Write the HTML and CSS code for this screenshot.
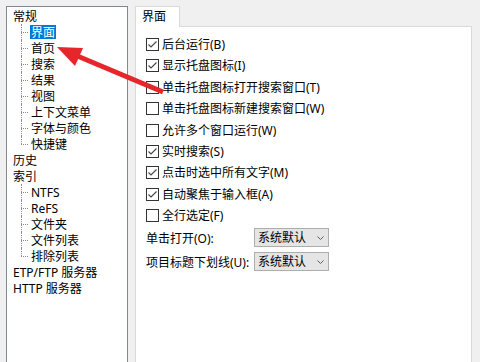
FILE: index.html
```html
<!DOCTYPE html>
<html lang="zh-CN">
<head>
<meta charset="utf-8">
<title>选项</title>
<link rel="stylesheet" href="styles.css">
</head>
<body>
<div class="window">
  <div class="tree">
    <ul class="nodes">
      <li><span class="label">常规</span>
        <ul class="children">
          <li><span class="label selected">界面</span></li>
          <li><span class="label">首页</span></li>
          <li><span class="label">搜索</span></li>
          <li><span class="label">结果</span></li>
          <li><span class="label">视图</span></li>
          <li><span class="label">上下文菜单</span></li>
          <li><span class="label">字体与颜色</span></li>
          <li><span class="label">快捷键</span></li>
        </ul>
      </li>
      <li><span class="label">历史</span></li>
      <li><span class="label">索引</span>
        <ul class="children">
          <li><span class="label">NTFS</span></li>
          <li><span class="label">ReFS</span></li>
          <li><span class="label">文件夹</span></li>
          <li><span class="label">文件列表</span></li>
          <li><span class="label">排除列表</span></li>
        </ul>
      </li>
      <li><span class="label">ETP/FTP 服务器</span></li>
      <li><span class="label">HTTP 服务器</span></li>
    </ul>
  </div>
  <div class="tabs">
    <div class="tab">界面</div>
    <div class="page">
      <div class="checks">
        <div class="check"><span class="box checked"><svg viewBox="0 0 11 11" width="11" height="11"><polyline points="1.5,5.5 4,8 9.5,2.5"/></svg></span><span>后台运行(B)</span></div>
        <div class="check"><span class="box checked"><svg viewBox="0 0 11 11" width="11" height="11"><polyline points="1.5,5.5 4,8 9.5,2.5"/></svg></span><span>显示托盘图标(I)</span></div>
        <div class="check"><span class="box"></span><span>单击托盘图标打开搜索窗口(T)</span></div>
        <div class="check"><span class="box"></span><span>单击托盘图标新建搜索窗口(W)</span></div>
        <div class="check"><span class="box"></span><span>允许多个窗口运行(W)</span></div>
        <div class="check"><span class="box checked"><svg viewBox="0 0 11 11" width="11" height="11"><polyline points="1.5,5.5 4,8 9.5,2.5"/></svg></span><span>实时搜索(S)</span></div>
        <div class="check"><span class="box checked"><svg viewBox="0 0 11 11" width="11" height="11"><polyline points="1.5,5.5 4,8 9.5,2.5"/></svg></span><span>点击时选中所有文字(M)</span></div>
        <div class="check"><span class="box checked"><svg viewBox="0 0 11 11" width="11" height="11"><polyline points="1.5,5.5 4,8 9.5,2.5"/></svg></span><span>自动聚焦于输入框(A)</span></div>
        <div class="check"><span class="box"></span><span>全行选定(F)</span></div>
      </div>
      <div class="fields">
        <div class="field"><span class="flabel">单击打开(O):</span><span class="select"><span>系统默认</span><svg viewBox="0 0 7 4" width="7" height="4"><polyline points="0.5,0.5 3.5,3.5 6.5,0.5"/></svg></span></div>
        <div class="field"><span class="flabel">项目标题下划线(U):</span><span class="select"><span>系统默认</span><svg viewBox="0 0 7 4" width="7" height="4"><polyline points="0.5,0.5 3.5,3.5 6.5,0.5"/></svg></span></div>
      </div>
    </div>
  </div>
</div>
<svg class="arrow" width="480" height="362" viewBox="0 0 480 362">
  <line x1="163" y1="92" x2="75" y2="55" />
  <polygon points="57,47 83,48 75,66" />
</svg>
</body>
</html>
```
FILE: styles.css
```css
html, body {
  margin: 0;
  padding: 0;
}
body {
  width: 480px;
  height: 362px;
  overflow: hidden;
  position: relative;
  background: #f0f0f0;
  font-family: "Noto Sans", "Noto Sans CJK SC", sans-serif;
  font-size: 12px;
  color: #000;
}
.window {
  display: flex;
  gap: 7px;
  padding: 6px 0 0 6px;
  height: 362px;
  box-sizing: border-box;
  overflow: hidden;
}
.tree {
  width: 122px;
  box-sizing: border-box;
  border: 1px solid #828790;
  border-bottom: none;
  background: #fff;
  padding: 1px 0 0 5px;
}
.tree ul {
  list-style: none;
  margin: 0;
  padding: 0;
}
.tree li {
  display: flow-root;
}
.label {
  display: block;
  width: fit-content;
  height: 14px;
  line-height: 15px;
  margin: 1px 0;
  padding: 0 1px;
  white-space: nowrap;
}
.label.selected {
  background: #0078d7;
  color: #fff;
}
.children {
  padding-left: 18px !important;
}
.children > li {
  position: relative;
}
.children > li::before {
  content: "";
  position: absolute;
  left: -9px;
  top: 8px;
  width: 7px;
  border-top: 1px dotted #8a8a8a;
}
.children > li::after {
  content: "";
  position: absolute;
  left: -9px;
  top: 0;
  height: 16px;
  border-left: 1px dotted #8a8a8a;
}
.children > li:last-child::after {
  height: 8px;
}
.tabs {
  width: 337px;
  display: flex;
  flex-direction: column;
}
.tab {
  align-self: flex-start;
  height: 20px;
  line-height: 19px;
  border: 1px solid #d9d9d9;
  border-bottom: none;
  background: #fff;
  padding: 0 13px 0 6px;
  margin-bottom: -1px;
  position: relative;
  z-index: 1;
}
.page {
  flex: 1;
  border: 1px solid #d9d9d9;
  border-bottom: none;
  background: #fff;
  padding: 11px 0 0 10px;
}
.checks {
  display: flex;
  flex-direction: column;
  gap: 8.375px;
}
.check {
  display: flex;
  align-items: center;
  gap: 3px;
  height: 13px;
  line-height: 13px;
  white-space: nowrap;
}
.box {
  width: 13px;
  height: 13px;
  box-sizing: border-box;
  border: 1px solid #333;
  background: #fff;
  display: flex;
  flex: none;
}
.box svg polyline {
  fill: none;
  stroke: #444;
  stroke-width: 1.1;
}
.fields {
  display: flex;
  flex-direction: column;
  gap: 5px;
  margin-top: 6px;
}
.field {
  display: flex;
  align-items: center;
  height: 19px;
}
.flabel {
  width: 108px;
  white-space: nowrap;
}
.select {
  width: 75px;
  height: 19px;
  box-sizing: border-box;
  border: 1px solid #adadad;
  background: #e5e5e5;
  display: flex;
  align-items: center;
  justify-content: space-between;
  padding: 0 4px 0 3px;
  line-height: 17px;
}
.select svg polyline {
  fill: none;
  stroke: #606060;
  stroke-width: 1;
}
.arrow {
  position: absolute;
  left: 0;
  top: 0;
  pointer-events: none;
}
.arrow line {
  stroke: #e5262b;
  stroke-width: 5;
}
.arrow polygon {
  fill: #e5262b;
}
```
